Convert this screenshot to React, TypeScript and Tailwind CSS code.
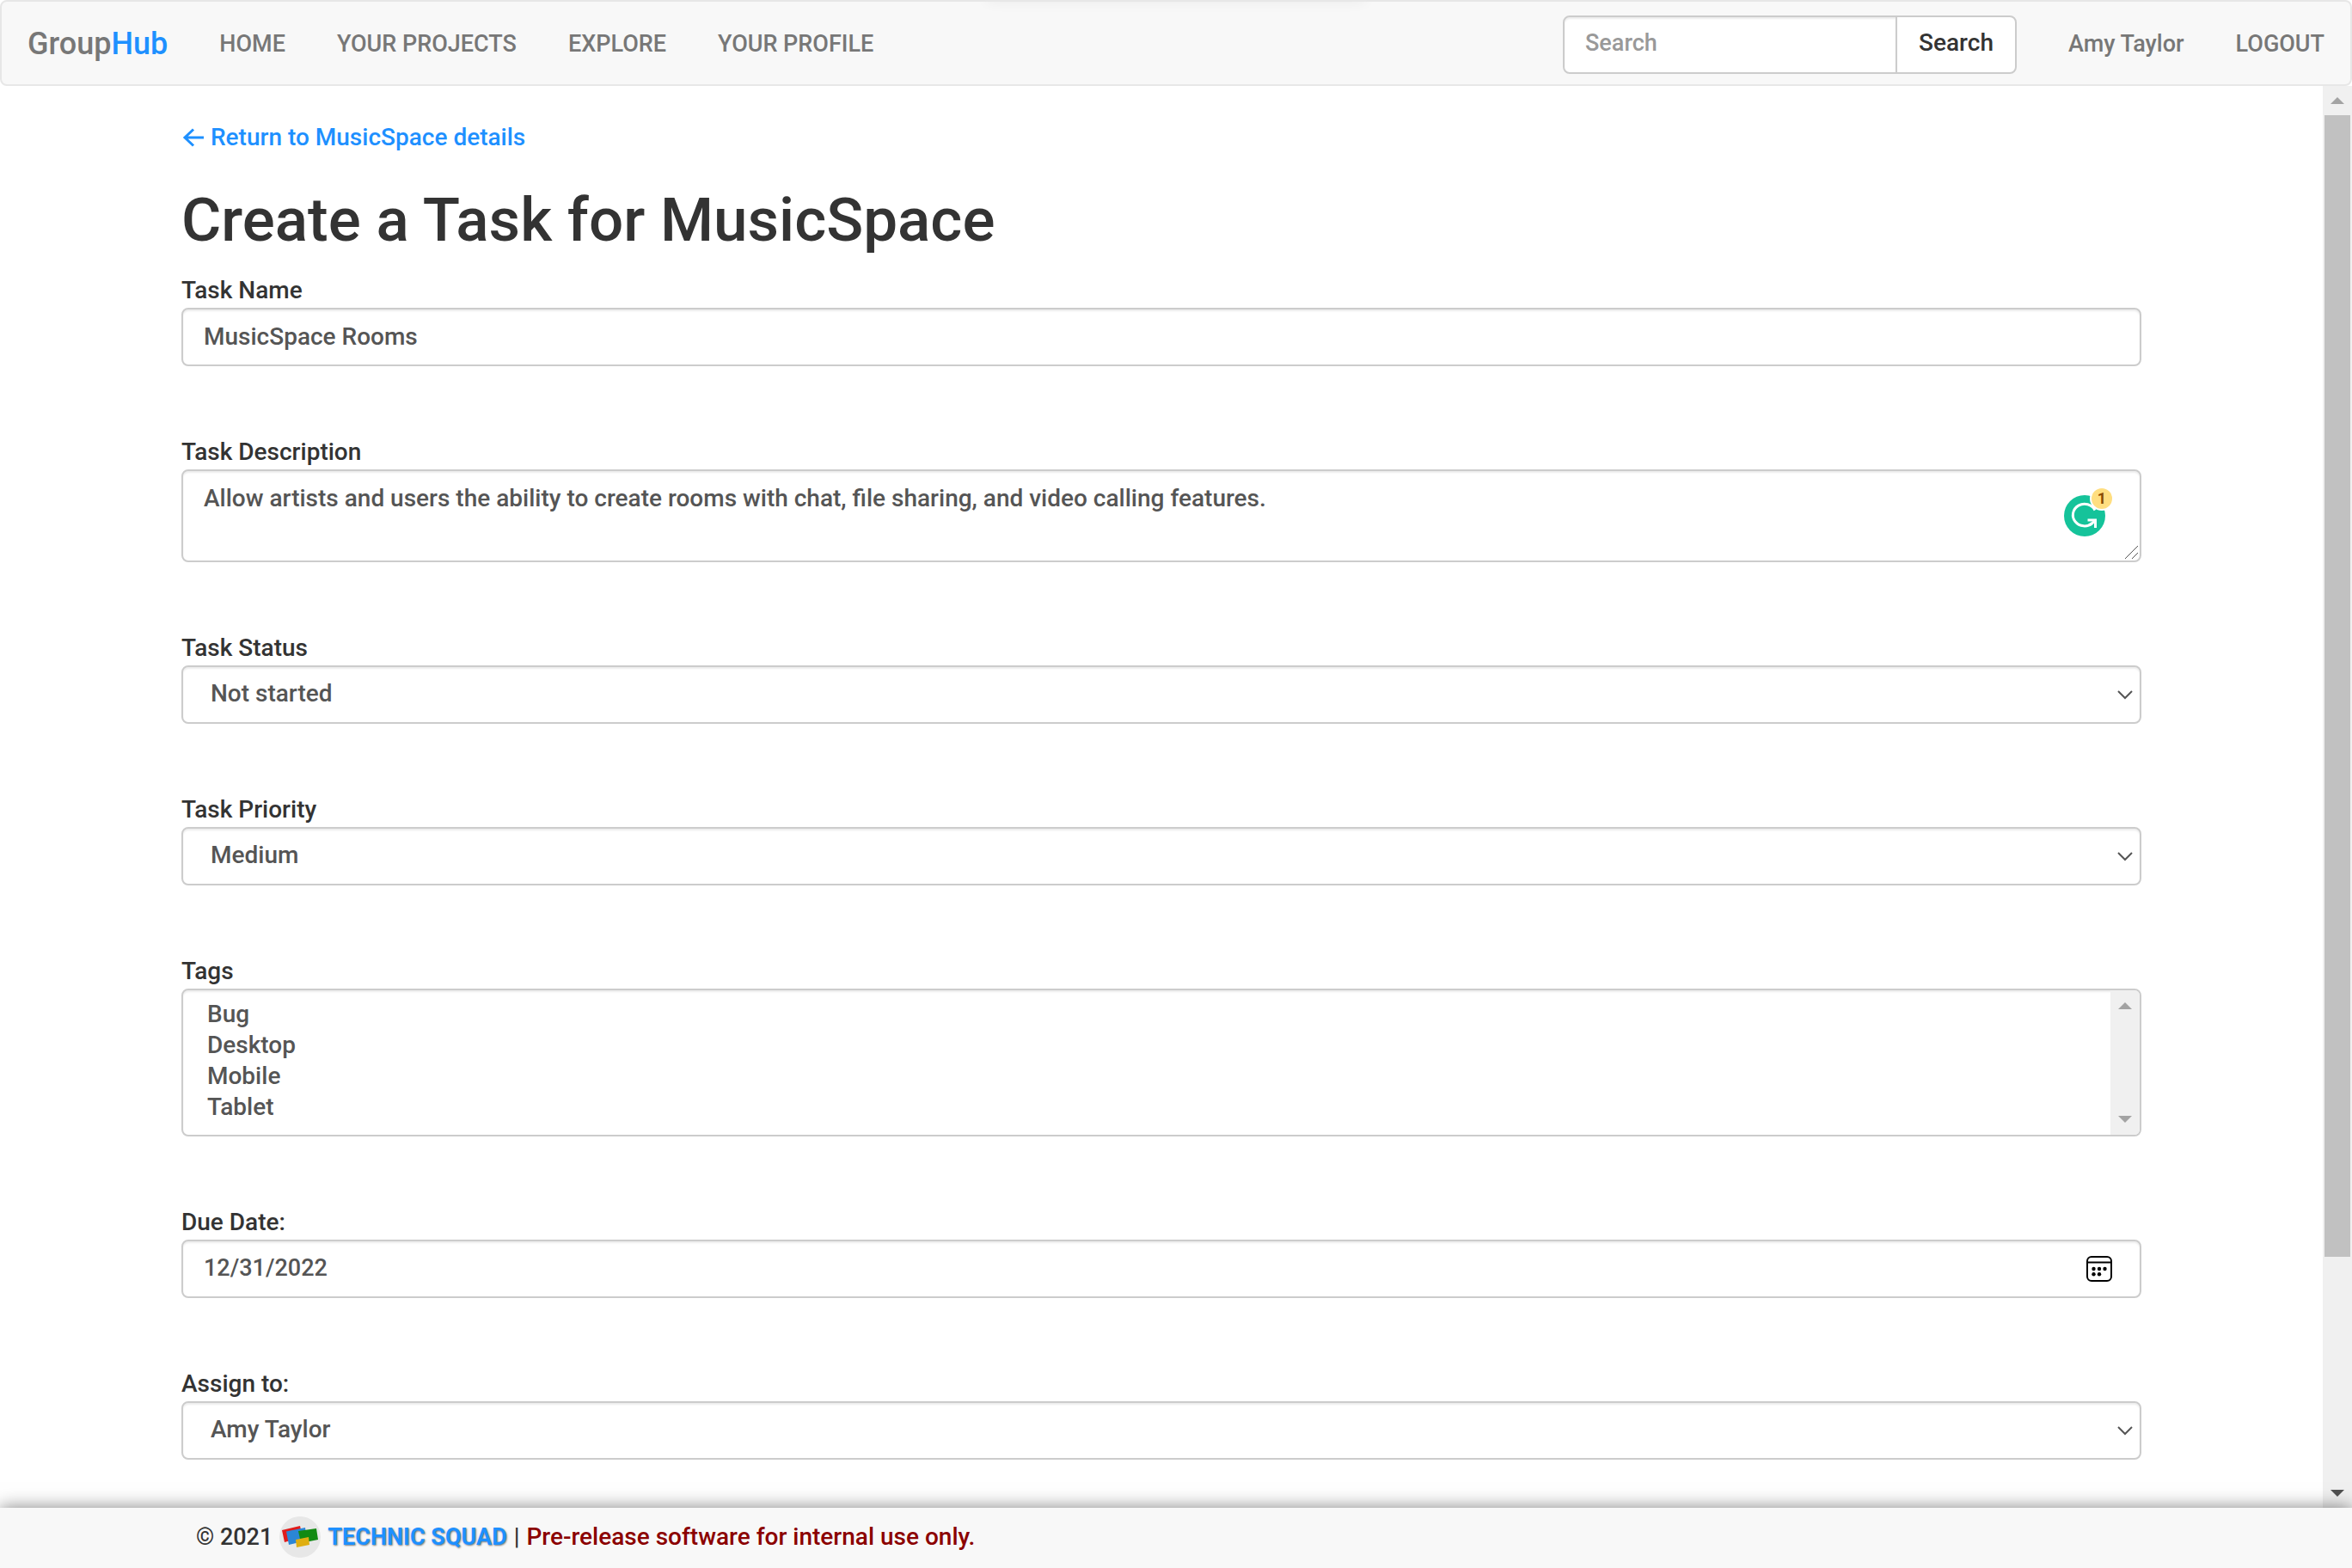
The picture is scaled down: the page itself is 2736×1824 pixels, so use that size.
import React, { useState } from "react";

const FONT = "font-['Roboto','Liberation_Sans',sans-serif]";
const BOX = "rounded-lg border-2 border-[#cccccc] bg-white shadow-[inset_0_2px_2px_rgba(0,0,0,0.075)]";

function Arrow({ down = false }: { down?: boolean }) {
  return (
    <svg width="16" height="8" viewBox="0 0 16 8" aria-hidden="true">
      <path d={down ? "M0 0H16L8 8Z" : "M0 8H16L8 0Z"} fill="currentColor" />
    </svg>
  );
}

function Field({ id, label, children }: { id: string; label: string; children: React.ReactNode }) {
  return (
    <div className="mb-[78px]">
      <label htmlFor={id} className="block h-[42px] leading-11 font-medium">
        {label}
      </label>
      {children}
    </div>
  );
}

function SelectBox({ id, options }: { id: string; options: string[] }) {
  return (
    <div className="relative">
      <select id={id} className={`${BOX} block h-[68px] w-full appearance-none pr-14 pb-0.5 pl-8 font-medium text-[#555555]`}>
        {options.map((o) => (
          <option key={o}>{o}</option>
        ))}
      </select>
      <svg width="18" height="11" viewBox="0 0 18 11" className="pointer-events-none absolute top-[29px] right-2.5" aria-hidden="true">
        <path d="M1 1L9 9L17 1" fill="none" stroke="#555555" strokeWidth="2" />
      </svg>
    </div>
  );
}

function AssistantBadge() {
  return (
    <svg width="60" height="60" viewBox="0 0 60 60" className="absolute top-5 right-[30px]" role="img" aria-label="1 suggestion">
      <circle cx="24" cy="34" r="24" fill="#15c39a" />
      <path d="M36 27.500A13.500 12.800 0 1 0 33 42.500L36.500 39" fill="none" stroke="#fff" strokeWidth="3" />
      <path d="M27.500 39H36.500V48" fill="none" stroke="#fff" strokeWidth="3" />
      <path d="M30 45L36 39.500" stroke="#fff" strokeWidth="2" />
      <circle cx="44" cy="14" r="14" fill="#fff" />
      <circle cx="44" cy="14" r="12" fill="#ffde80" />
      <text x="44" y="20" textAnchor="middle" fontSize="18" fontWeight="700" fill="#8a4b00">
        1
      </text>
    </svg>
  );
}

function CalendarIcon() {
  return (
    <svg width="30" height="30" viewBox="0 0 30 30" aria-hidden="true">
      <rect x="1" y="1" width="28" height="28" rx="5" fill="none" stroke="#000" strokeWidth="2" />
      <path d="M1 7.500H29" stroke="#000" strokeWidth="2" />
      {[[8.5, 15], [15, 15], [21.5, 15], [8.5, 21.3], [15, 21.3]].map(([x, y]) => (
        <circle key={`${x}-${y}`} cx={x} cy={y} r="2.200" />
      ))}
    </svg>
  );
}

function SquadLogo() {
  return (
    <svg width="48" height="48" viewBox="0 0 48 48" aria-hidden="true">
      <circle cx="24" cy="24" r="24" fill="#e7e7e7" />
      <path d="M3 16L24 11L27 24L6 30Z" fill="#e01b1b" />
      <path d="M8 17.500L30 13L32 28L11 33Z" fill="#2b86d6" />
      <path d="M22 17L43 14L45 27L25 31Z" fill="#128a12" />
      <path d="M19 27L34 24L35 33L20 36Z" fill="#dfae10" />
    </svg>
  );
}

const NAV = ["HOME", "YOUR PROJECTS", "EXPLORE", "YOUR PROFILE"];
const TAGS = ["Bug", "Desktop", "Mobile", "Tablet"];

export default function App() {
  const [name, setName] = useState("MusicSpace Rooms");
  const [text, setText] = useState(
    "Allow artists and users the ability to create rooms with chat, file sharing, and video calling features.",
  );
  const [due, setDue] = useState("12/31/2022");

  return (
    <div className={`${FONT} flex h-screen flex-col overflow-hidden bg-white text-[28px] leading-10 text-[#333333]`}>
      <nav className="relative flex h-[100px] shrink-0 items-center overflow-hidden rounded-lg border-2 border-[#e7e7e7] bg-[#f8f8f8] px-[30px] pt-0.5 text-[27px] font-medium text-[#777777]">
        <div className="pointer-events-none absolute inset-x-0 -top-5 mx-auto h-5 w-[440px] shadow-[0_0_16px_rgba(0,0,0,0.06)]" />
        <a href="#" className="text-4xl font-medium">
          Group<span className="text-[#1e90ff]">Hub</span>
        </a>
        <div className="ml-[60px] flex gap-[60px]">
          {NAV.map((n) => (
            <a key={n} href="#">
              {n}
            </a>
          ))}
        </div>
        <form className="mt-0.5 ml-auto flex" onSubmit={(e) => e.preventDefault()}>
          <input
            type="text"
            aria-label="Search"
            placeholder="Search"
            className="h-[68px] w-[389px] rounded-l-lg border-2 border-[#cccccc] bg-white px-6 pb-1 shadow-[inset_0_2px_2px_rgba(0,0,0,0.075)] placeholder:text-[#999999]"
          />
          <button className="-ml-0.5 h-[68px] w-[141px] rounded-r-lg border-2 border-[#cccccc] bg-white pb-1 text-[28px] text-[#333333]">
            Search
          </button>
        </form>
        <div className="ml-[60px] flex gap-[60px]">
          <a href="#">Amy Taylor</a>
          <a href="#">LOGOUT</a>
        </div>
      </nav>

      <div className="flex min-h-0 flex-1">
        <main className="min-w-0 flex-1 overflow-hidden">
          <div className="mx-auto max-w-[2340px] px-[30px] pt-10">
            <a href="#" className="flex items-center gap-2 font-medium text-[#1e90ff]">
              <svg width="26" height="22" viewBox="0 0 26 22" aria-hidden="true">
                <path d="M14 1.500L4 11L14 20.500M4 11H26" fill="none" stroke="currentColor" strokeWidth="3" />
              </svg>
              Return to MusicSpace details
            </a>
            <h1 className="mt-9 mb-5 text-[71px] leading-20 font-medium">Create a Task for MusicSpace</h1>
            <form onSubmit={(e) => e.preventDefault()}>
              <Field id="name" label="Task Name">
                <input
                  id="name"
                  value={name}
                  onChange={(e) => setName(e.target.value)}
                  className={`${BOX} block h-[68px] w-full px-6 pb-0.5 font-medium text-[#555555]`}
                />
              </Field>
              <Field id="description" label="Task Description">
                <div className="relative">
                  <textarea
                    id="description"
                    value={text}
                    onChange={(e) => setText(e.target.value)}
                    className={`${BOX} block h-[108px] w-full resize-none px-6 py-3 font-medium text-[#555555]`}
                  />
                  <AssistantBadge />
                  <svg width="17" height="17" viewBox="0 0 17 17" className="absolute right-[3px] bottom-[3px]" aria-hidden="true">
                    <path d="M1 16L16 1M9 16L16 9" stroke="#555555" strokeWidth="1" />
                  </svg>
                </div>
              </Field>
              <Field id="status" label="Task Status">
                <SelectBox id="status" options={["Not started", "In progress", "Completed"]} />
              </Field>
              <Field id="priority" label="Task Priority">
                <SelectBox id="priority" options={["Medium", "Low", "High"]} />
              </Field>
              <Field id="tags" label="Tags">
                <div className={`${BOX} flex h-[172px] overflow-hidden`}>
                  <select
                    id="tags"
                    multiple
                    className="min-w-0 flex-1 appearance-none overflow-hidden bg-transparent px-6 pt-[11px] pb-2 text-[#555555]"
                  >
                    {TAGS.map((t) => (
                      <option key={t} className="h-9 min-h-9 px-1 leading-9 font-medium">
                        {t}
                      </option>
                    ))}
                  </select>
                  <div className="flex w-[34px] flex-col items-center justify-between bg-[#f0f0f0] py-3.5 text-[#a3a3a3]">
                    <Arrow />
                    <Arrow down />
                  </div>
                </div>
              </Field>
              <Field id="due" label="Due Date:">
                <div className={`${BOX} flex h-[68px] items-center pr-8`}>
                  <input
                    id="due"
                    value={due}
                    onChange={(e) => setDue(e.target.value)}
                    className="min-w-0 flex-1 bg-transparent px-6 pb-0.5 text-[27px] font-medium text-[#555555]"
                  />
                  <button type="button" aria-label="Open calendar">
                    <CalendarIcon />
                  </button>
                </div>
              </Field>
              <Field id="assign" label="Assign to:">
                <SelectBox id="assign" options={["Amy Taylor"]} />
              </Field>
            </form>
          </div>
        </main>
        <div className="flex w-[34px] shrink-0 flex-col items-center bg-[#f0f0f0]">
          <div className="flex h-[34px] shrink-0 items-center text-[#a3a3a3]">
            <Arrow />
          </div>
          <div className="flex w-full flex-1 flex-col px-0.5">
            <div className="grow-[1328] bg-[#c1c1c1]" />
            <div className="grow-[258]" />
          </div>
          <div className="flex h-[34px] shrink-0 items-center text-[#505050]">
            <Arrow down />
          </div>
        </div>
      </div>

      <footer className="relative h-[70px] shrink-0 bg-[#f8f8f8] shadow-[0_0_20px_rgba(0,0,0,0.5)]">
        <div className="flex h-full items-center gap-2 pb-0.5 pl-[228px] text-[27px] font-medium">
          <span>© 2021</span>
          <SquadLogo />
          <a href="#" className="font-bold text-[#1e90ff] [text-shadow:1px_1px_2px_rgba(0,0,0,0.5)]">
            TECHNIC SQUAD
          </a>
          <span>|</span>
          <span className="text-[28px] text-[#8b0000]">Pre-release software for internal use only.</span>
        </div>
      </footer>
    </div>
  );
}
